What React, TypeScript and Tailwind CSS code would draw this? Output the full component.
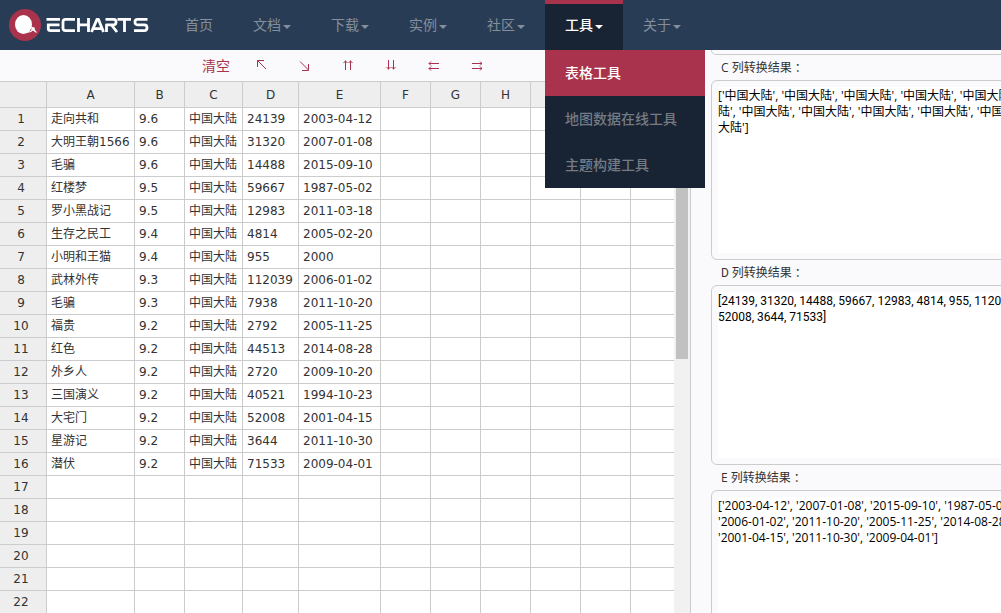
import React from "react";

const cjk = "font-['DejaVu_Sans','Noto_Sans_CJK_SC',sans-serif]";

const nav = [
  { label: "首页", menu: false },
  { label: "文档", menu: true },
  { label: "下载", menu: true },
  { label: "实例", menu: true },
  { label: "社区", menu: true },
  { label: "工具", menu: true, active: true },
  { label: "关于", menu: true },
];

const tools = ["表格工具", "地图数据在线工具", "主题构建工具"];

const columns = ["A", "B", "C", "D", "E", "F", "G", "H", "I", "J", "K"];

const rows: string[][] = [
  ["走向共和", "9.6", "中国大陆", "24139", "2003-04-12"],
  ["大明王朝1566", "9.6", "中国大陆", "31320", "2007-01-08"],
  ["毛骗", "9.6", "中国大陆", "14488", "2015-09-10"],
  ["红楼梦", "9.5", "中国大陆", "59667", "1987-05-02"],
  ["罗小黑战记", "9.5", "中国大陆", "12983", "2011-03-18"],
  ["生存之民工", "9.4", "中国大陆", "4814", "2005-02-20"],
  ["小明和王猫", "9.4", "中国大陆", "955", "2000"],
  ["武林外传", "9.3", "中国大陆", "112039", "2006-01-02"],
  ["毛骗", "9.3", "中国大陆", "7938", "2011-10-20"],
  ["福贵", "9.2", "中国大陆", "2792", "2005-11-25"],
  ["红色", "9.2", "中国大陆", "44513", "2014-08-28"],
  ["外乡人", "9.2", "中国大陆", "2720", "2009-10-20"],
  ["三国演义", "9.2", "中国大陆", "40521", "1994-10-23"],
  ["大宅门", "9.2", "中国大陆", "52008", "2001-04-15"],
  ["星游记", "9.2", "中国大陆", "3644", "2011-10-30"],
  ["潜伏", "9.2", "中国大陆", "71533", "2009-04-01"],
  [], [], [], [], [], [],
];

const results = [
  {
    col: "C",
    font: "font-['Open_Sans','Noto_Sans_CJK_SC',sans-serif]",
    text:
      "['中国大陆', '中国大陆', '中国大陆', '中国大陆', '中国大陆', '中国大陆', '中国大陆', '中国大\n陆', '中国大陆', '中国大陆', '中国大陆', '中国大陆', '中国大陆', '中国大陆', '中国大陆', '中国\n大陆']",
  },
  {
    col: "D",
    font: "font-['Roboto','Noto_Sans_CJK_SC',sans-serif]",
    text:
      "[24139, 31320, 14488, 59667, 12983, 4814, 955, 112039, 7938, 2792, 44513, 2720, 40521,\n52008, 3644, 71533]",
  },
  {
    col: "E",
    font: "font-['Open_Sans','Noto_Sans_CJK_SC',sans-serif]",
    text:
      "['2003-04-12', '2007-01-08', '2015-09-10', '1987-05-02', '2011-03-18', '2005-02-20', '2000',\n'2006-01-02', '2011-10-20', '2005-11-25', '2014-08-28', '2009-10-20', '1994-10-23',\n'2001-04-15', '2011-10-30', '2009-04-01']",
  },
];

const arrows = [
  { label: "左上", d: "M1.500 7V.5H8M1.500 .5L10 9" },
  { label: "右下", d: "M1 1.500L9.500 10M3 10.500H9.500V4" },
  { label: "上移", d: "M3.500 10V.5M1.500 3L3.500 1L5.500 3M8.500 10V.5M6.500 3L8.500 1L10.500 3" },
  { label: "下移", d: "M3.500 0V9.500M1.500 7L3.500 9L5.500 7M8.500 0V9.500M6.500 7L8.500 9L10.500 7" },
  { label: "左移", d: "M11 3.500H1M3 1.500L1 3.500L3 5.500M11 8.500H1M3 6.500L1 8.500L3 10.500" },
  { label: "右移", d: "M1 3.500H11M9 1.500L11 3.500L9 5.500M1 8.500H11M9 6.500L11 8.500L9 10.500" },
];

function Logo() {
  return (
    <svg width="141" height="34" viewBox="0 0 141 34" role="img" aria-label="ECHARTS">
      <circle cx="16" cy="17" r="16" fill="#a9334c" />
      <ellipse cx="14.500" cy="16.500" rx="8.500" ry="9.500" fill="#fff" />
      <path d="M18 25L22.500 22L22 18.500L25.500 19.500L26 22L28 24.500L26.500 24.500L24 22.500L22 24Z" fill="#fff" />
      <g fill="none" stroke="#fff" strokeWidth="2.8" strokeLinejoin="round">
        <path d="M37.500 11.400H51M38 16.800H50.500M39.300 16V20.500Q39.300 22.600 41.500 22.600H51" />
        <path d="M66 11.400H56.500Q54 11.400 54 14V20Q54 22.600 56.500 22.600H66" />
        <path d="M69.500 10V24M79.500 10V24M69.500 16.800H79.500" />
        <path d="M82.500 24L88 11.400H89.500L94.500 24M85 20.600H92" />
        <path d="M97.500 24V16.800H105Q107 16.800 107 14.100T105 11.400H96.500M102.500 17L108 24" />
        <path d="M108.500 11.400H122M115.500 11.400V24" />
        <path d="M138.500 11.400H128.500Q126 11.400 126 14.100T128.500 16.800H135.500Q138 16.800 138 19.700T135.500 22.600H125" />
      </g>
    </svg>
  );
}

export default function App() {
  return (
    <div className={`flex h-screen flex-col overflow-hidden bg-[#fafafc] text-xs text-[#333] ${cjk}`}>
      <header className="relative z-10 flex h-[50px] shrink-0 bg-[#293c55] pl-[9px]">
        <a href="#home" className="flex w-[156px] items-center">
          <Logo />
        </a>
        <nav className="flex text-sm">
          {nav.map((item) => (
            <div key={item.label} className="relative flex">
              <a
                href="#nav"
                className={`flex items-center border-y-4 border-b-transparent px-5 ${
                  item.active
                    ? "border-t-[#a9334c] bg-[#182334] font-medium text-white"
                    : "border-t-transparent text-[#848f9c]"
                }`}
              >
                {item.label}
                {item.menu && (
                  <span className="ml-0.5 mt-1 border-x-4 border-t-4 border-x-transparent border-t-current" />
                )}
              </a>
              {item.active && (
                <ul className="absolute top-full left-0 w-40 bg-[#182334] font-medium">
                  {tools.map((tool, i) => (
                    <li key={tool}>
                      <a
                        href="#tool"
                        className={`flex h-[46px] items-center px-5 ${
                          i === 0 ? "bg-[#a9334c] text-white" : "text-[#747b85]"
                        }`}
                      >
                        {tool}
                      </a>
                    </li>
                  ))}
                </ul>
              )}
            </div>
          ))}
        </nav>
      </header>
      <main className="flex min-h-0 flex-1">
        <section className="flex w-[691px] shrink-0 flex-col border-r border-[#ccc]">
          <div className="flex h-[31px] shrink-0 items-center gap-8 pl-[202px] text-[#a9334c]">
            <button type="button" className="-mr-1.5 text-sm">清空</button>
            {arrows.map((a) => (
              <button key={a.label} type="button" aria-label={a.label}>
                <svg width="11" height="11" viewBox="0 0 11 11" fill="none" stroke="currentColor">
                  <path d={a.d} />
                </svg>
              </button>
            ))}
          </div>
          <div className="flex min-h-0 flex-1">
            <div className="min-w-0 flex-1 overflow-hidden bg-white">
              <table className="w-[681px] table-fixed border-separate border-spacing-0">
                <colgroup>
                  <col className="w-[47px]" />
                  <col className="w-[88px]" />
                  <col className="w-[50px]" />
                  <col className="w-[58px]" />
                  <col className="w-[56px]" />
                  <col className="w-[82px]" />
                  <col className="w-[50px]" />
                  <col className="w-[50px]" />
                  <col className="w-[50px]" />
                  <col className="w-[50px]" />
                  <col className="w-[50px]" />
                  <col className="w-[50px]" />
                </colgroup>
                <thead>
                  <tr className="h-[27px] bg-[#eee]">
                    <th className="border-y border-r border-[#ccc]" />
                    {columns.map((c) => (
                      <th key={c} className="border-y border-r border-[#ccc] font-normal">{c}</th>
                    ))}
                  </tr>
                </thead>
                <tbody>
                  {rows.map((row, i) => (
                    <tr key={i} className="h-[23px]">
                      <th className="border-r border-b border-[#ccc] bg-[#eee] p-0 pr-1 font-normal">{i + 1}</th>
                      {columns.map((c, j) => (
                        <td key={c} className="border-r border-b border-[#ccc] px-1 py-0 whitespace-nowrap">
                          {row[j]}
                        </td>
                      ))}
                    </tr>
                  ))}
                </tbody>
              </table>
            </div>
            <div className="w-4 shrink-0 bg-[#f1f1f1] px-0.5">
              <div className="h-[278px] bg-[#c1c1c1]" />
            </div>
          </div>
        </section>
        <section className="min-w-0 flex-1 overflow-hidden pl-5">
          <div className="h-[5px] w-[496px] rounded-b-md border border-t-0 border-[#ccc]" />
          {results.map((r) => (
            <div key={r.col} className={`w-[496px] ${r.font}`}>
              <label htmlFor={`result-${r.col}`} className="flex h-[25px] items-center pl-2.5">
                {r.col} 列转换结果
                <span className="font-['Noto_Sans_CJK_TC',sans-serif]" lang="zh-Hant">：</span>
              </label>
              <div className="h-[180px] rounded-md border border-[#ccc] p-1.5">
                <textarea
                  id={`result-${r.col}`}
                  readOnly
                  wrap="off"
                  defaultValue={r.text}
                  className="block h-full w-full resize-none overflow-hidden bg-white pt-px leading-4 text-black"
                />
              </div>
            </div>
          ))}
        </section>
      </main>
    </div>
  );
}
